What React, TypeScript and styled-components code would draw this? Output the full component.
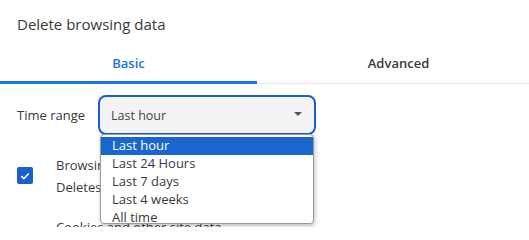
import React from "react";
import styled, { createGlobalStyle } from "styled-components";

const Global = createGlobalStyle`
  html, body { margin: 0; padding: 0; background: #fff; }
  body { font-family: "Open Sans", "Noto Sans", sans-serif; color: #3c3c3c; overflow: hidden; }
`;

const Page = styled.div`
  width: 529px;
  height: 227px;
  position: relative;
  overflow: hidden;
`;

const Title = styled.div`
  padding: 14px 0 0 17px;
  height: 30px;
  box-sizing: border-box;
  font-size: 15px;
  line-height: 20px;
  color: #3a3a3a;
`;

const Tabs = styled.div`
  margin-top: 14px;
  width: 540px;
  display: grid;
  grid-template-columns: 257px 1fr;
  border-bottom: 1px solid #e8e8e8;
`;

const Tab = styled.div<{ $active?: boolean }>`
  height: 40px;
  display: flex;
  align-items: center;
  justify-content: center;
  padding-bottom: 2px;
  box-sizing: border-box;
  font-size: 13px;
  font-weight: 600;
  color: ${(p) => (p.$active ? "#1a73e8" : "#3a3a3a")};
  box-shadow: ${(p) => (p.$active ? "inset 0 -3px 0 #1a73e8" : "none")};
  margin-bottom: -1px;
`;

const Body = styled.div`
  padding: 11px 0 0 17px;
`;

const FieldRow = styled.div`
  display: flex;
  align-items: center;
  gap: 13px;
`;

const Label = styled.span`
  font-size: 13px;
  color: #3a3a3a;
`;

const SelectWrap = styled.div`
  position: relative;
`;

const SelectBox = styled.div`
  width: 218px;
  height: 40px;
  box-sizing: border-box;
  border: 2px solid #1a5fd0;
  border-radius: 8px;
  background: #f3f3f3;
  display: flex;
  align-items: center;
  justify-content: space-between;
  padding: 0 12px 0 11px;
  font-size: 12.5px;
  color: #444;
`;

const Caret = styled.span`
  width: 0;
  height: 0;
  border-left: 4px solid transparent;
  border-right: 4px solid transparent;
  border-top: 4px solid #555;
  margin-top: -3px;
`;

const Menu = styled.ul`
  position: absolute;
  left: 2px;
  top: 39px;
  width: 214px;
  height: 90px;
  overflow: hidden;
  margin: 0;
  padding: 2px 0 0;
  list-style: none;
  background: #fff;
  border: 1px solid #9a9a9a;
  border-radius: 4px;
  box-shadow: 1px 2px 4px rgba(0, 0, 0, 0.25);
  box-sizing: border-box;
  z-index: 2;
`;

const Item = styled.li<{ $selected?: boolean }>`
  height: 18px;
  line-height: 17px;
  padding-left: 11px;
  font-size: 13px;
  color: ${(p) => (p.$selected ? "#fff" : "#3a3a3a")};
  background: ${(p) => (p.$selected ? "#1a66cc" : "transparent")};
`;

const CheckRow = styled.div`
  display: flex;
  align-items: flex-start;
  gap: 23px;
  margin-top: 19px;
`;

const Check = styled.div`
  width: 16px;
  height: 17px;
  margin-top: 13px;
  border-radius: 2px;
  background: #1a5fd0;
  display: flex;
  align-items: center;
  justify-content: center;
`;

const CheckText = styled.div`
  font-size: 13px;
  line-height: 22px;
  color: #3a3a3a;
`;

const Sub = styled.div`
  font-size: 13px;
  line-height: 22px;
  margin: 18px 0 0 39px;
  color: #3a3a3a;
`;

const options = ["Last hour", "Last 24 Hours", "Last 7 days", "Last 4 weeks", "All time"];

export default function App() {
  return (
    <Page>
      <Global />
      <Title>Delete browsing data</Title>
      <Tabs>
        <Tab $active>Basic</Tab>
        <Tab>Advanced</Tab>
      </Tabs>
      <Body>
        <FieldRow>
          <Label>Time range</Label>
          <SelectWrap>
            <SelectBox>
              <span>Last hour</span>
              <Caret />
            </SelectBox>
            <Menu>
              {options.map((o, i) => (
                <Item key={o} $selected={i === 0}>
                  {o}
                </Item>
              ))}
            </Menu>
          </SelectWrap>
        </FieldRow>
        <CheckRow>
          <Check>
            <svg width="12" height="12" viewBox="0 0 12 12">
              <path d="M2.3 6.2 L4.9 8.7 L9.7 3.5" fill="none" stroke="#fff" strokeWidth="1.6" />
            </svg>
          </Check>
          <CheckText>
            Browsing history
            <br />
            Deletes history from all signed-in devices
          </CheckText>
        </CheckRow>
        <Sub>Cookies and other site data</Sub>
      </Body>
    </Page>
  );
}
